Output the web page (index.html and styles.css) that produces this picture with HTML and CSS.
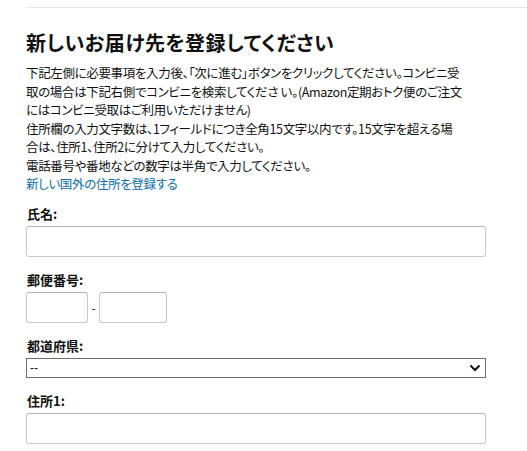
FILE: index.html
```html
<!DOCTYPE html>
<html lang="ja">
<head>
<meta charset="utf-8">
<title>新しいお届け先を登録してください</title>
<link rel="stylesheet" href="styles.css">
</head>
<body>
<div class="page">
  <hr class="rule">
  <h1 class="title">新しいお届け先を登録してください</h1>
  <p class="intro">下記左側に必要事項を入力後、「次に進む」ボタンをクリックしてください。コンビニ受<br>取の場合は下記右側でコンビニを検索してくださ い。(Amazon定期おトク便のご注文<br>にはコンビニ受取はご利用いただけません)<br>住所欄の入力文字数は、1フィールドにつき全角15文字以内です。15文字を超える場<br>合は、住所1、住所2に分けて入力してください。<br>電話番号や番地などの数字は半角で入力してください。<br><a class="link" href="#">新しい国外の住所を登録する</a></p>
  <form class="form">
    <div class="field">
      <label class="label">氏名:</label>
      <input class="input full" type="text">
    </div>
    <div class="field">
      <label class="label">郵便番号:</label>
      <div class="zip">
        <input class="input zip1" type="text">
        <span class="dash">-</span>
        <input class="input zip2" type="text">
      </div>
    </div>
    <div class="field">
      <label class="label">都道府県:</label>
      <div class="select-wrap">
        <select class="select"><option>--</option></select>
        <svg class="chev" width="12" height="8" viewBox="0 0 12 8"><path d="M1.5 1.5 L6 6 L10.5 1.5" fill="none" stroke="#111" stroke-width="2"/></svg>
      </div>
    </div>
    <div class="field">
      <label class="label">住所1:</label>
      <input class="input full" type="text">
    </div>
  </form>
</div>
</body>
</html>
```
FILE: styles.css
```css
html, body {
  margin: 0;
  padding: 0;
  background: #fff;
}
body {
  font-family: "Noto Sans CJK JP", "Liberation Sans", sans-serif;
  color: #111;
  font-feature-settings: "palt";
}
.page {
  margin-left: 26px;
  padding-top: 7px;
}
.rule {
  margin: 0;
  border: 0;
  border-top: 1px solid #e7e7e7;
  height: 0;
}
.title {
  margin: 22px 0 0;
  font-size: 20px;
  line-height: 26px;
  font-weight: 700;
  color: #111;
  letter-spacing: 0.5px;
}
.intro {
  margin: 8px 0 0;
  font-size: 12.5px;
  line-height: 18.5px;
  white-space: nowrap;
  letter-spacing: -0.35px;
}
.link {
  color: #0a6eaa;
  text-decoration: none;
}
.form {
  width: 460px;
  margin-top: 11px;
}
.field {
  margin-bottom: 14px;
}
.label {
  display: block;
  font-size: 13px;
  line-height: 18px;
  font-weight: 700;
  margin-bottom: 3px;
  padding-left: 1px;
}
.input {
  box-sizing: border-box;
  height: 31px;
  border: 1px solid #c9c9c9;
  border-top-color: #b4b4b4;
  border-radius: 3px;
  background: #fff;
  padding: 0 6px;
  margin: 0;
  font-size: 13px;
  outline: none;
}
.full {
  display: block;
  width: 460px;
}
.zip {
  display: flex;
  align-items: center;
}
.zip1 {
  width: 62px;
}
.zip2 {
  width: 68px;
}
.dash {
  width: 11px;
  text-align: center;
  font-size: 12px;
  color: #111;
}
.select-wrap {
  position: relative;
  width: 460px;
}
.select {
  appearance: none;
  -webkit-appearance: none;
  display: block;
  box-sizing: border-box;
  width: 460px;
  height: 20px;
  border: 1px solid #6f6f6f;
  border-radius: 0;
  background: #fff;
  margin: 0;
  padding: 0 3px;
  font-family: "Liberation Sans", sans-serif;
  font-size: 12px;
  color: #111;
  outline: none;
}
.chev {
  position: absolute;
  right: 5px;
  top: 6px;
  pointer-events: none;
}
```
